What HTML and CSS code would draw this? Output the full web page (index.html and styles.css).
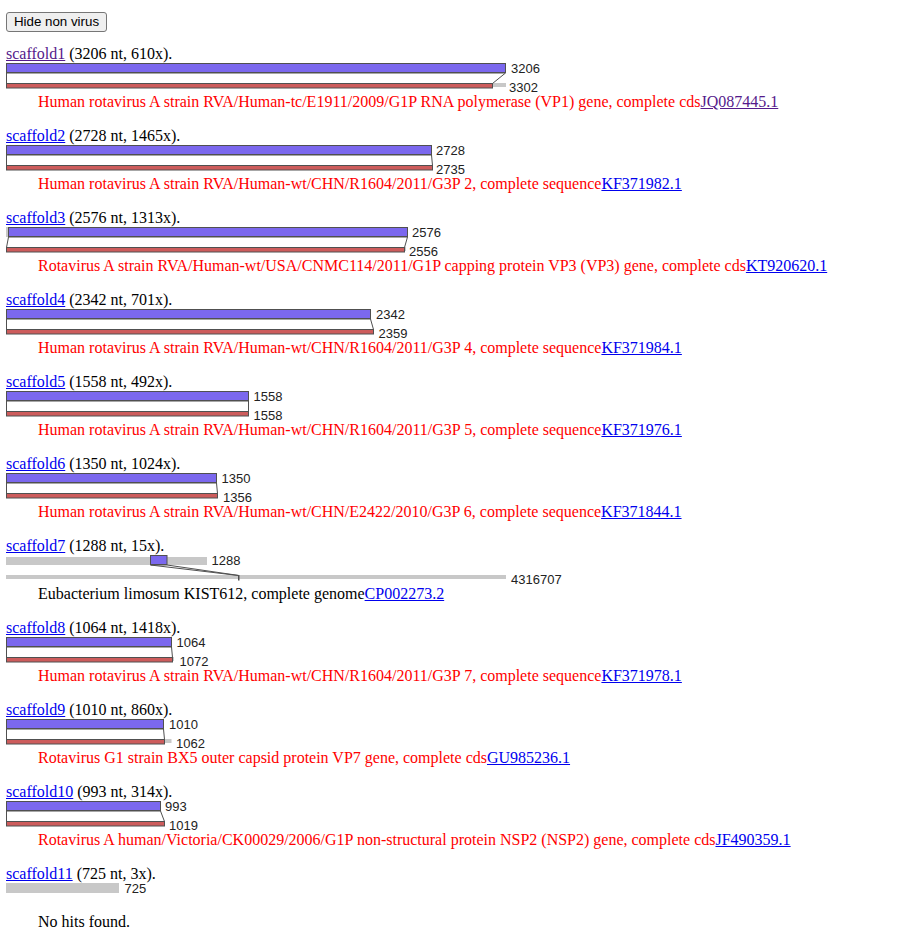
FILE: index.html
```html
<!DOCTYPE html>
<html>
<head>
<meta charset="utf-8">
<link rel="stylesheet" href="styles.css">
</head>
<body>
<div class="page">
<div class="bar"><button class="btn" type="button">Hide non virus</button></div>

<div class="block">
<div class="hdr"><a class="visited" href="#s1">scaffold1</a> (3206 nt, 610x).</div>
<svg class="fig" width="600" height="31">
<rect class="gl" x="6" y="21" width="500" height="4"/>
<polygon class="con" points="6.5,11 505.5,11 492.5,21.5 6.5,21.5"/>
<rect class="qa" x="6.5" y="1.5" width="499" height="9"/>
<rect class="sa" x="6.5" y="21.5" width="486" height="4.5"/>
<text class="lbl" x="511" y="10.7">3206</text>
<text class="lbl" x="509" y="30.3">3302</text>
</svg>
<div class="hit virus">Human rotavirus A strain RVA/Human-tc/E1911/2009/G1P RNA polymerase (VP1) gene, complete cds<a class="visited" href="#a1">JQ087445.1</a></div>
</div>

<div class="block">
<div class="hdr"><a href="#s2">scaffold2</a> (2728 nt, 1465x).</div>
<svg class="fig" width="600" height="31">
<rect class="gl" x="6" y="21" width="427" height="4"/>
<polygon class="con" points="6.5,11 431.5,11 432.5,21.5 6.5,21.5"/>
<rect class="qa" x="6.5" y="1.5" width="425" height="9"/>
<rect class="sa" x="6.5" y="21.5" width="426" height="4.5"/>
<text class="lbl" x="436" y="10.7">2728</text>
<text class="lbl" x="436" y="30.3">2735</text>
</svg>
<div class="hit virus">Human rotavirus A strain RVA/Human-wt/CHN/R1604/2011/G3P 2, complete sequence<a href="#a2">KF371982.1</a></div>
</div>

<div class="block">
<div class="hdr"><a href="#s3">scaffold3</a> (2576 nt, 1313x).</div>
<svg class="fig" width="600" height="31">
<rect class="gl" x="6" y="1" width="402" height="10"/>
<rect class="gl" x="6" y="21" width="400" height="4"/>
<polygon class="con" points="8.5,11 407.5,11 404.5,21.5 6.5,21.5"/>
<rect class="qa" x="8.5" y="1.5" width="399" height="9"/>
<rect class="sa" x="6.5" y="21.5" width="398" height="4.5"/>
<text class="lbl" x="412" y="10.7">2576</text>
<text class="lbl" x="409" y="30.3">2556</text>
</svg>
<div class="hit virus">Rotavirus A strain RVA/Human-wt/USA/CNMC114/2011/G1P capping protein VP3 (VP3) gene, complete cds<a href="#a3">KT920620.1</a></div>
</div>

<div class="block">
<div class="hdr"><a href="#s4">scaffold4</a> (2342 nt, 701x).</div>
<svg class="fig" width="600" height="31">
<rect class="gl" x="6" y="21" width="368" height="4"/>
<polygon class="con" points="6.5,11 370.5,11 373.5,21.5 6.5,21.5"/>
<rect class="qa" x="6.5" y="1.5" width="364" height="9"/>
<rect class="sa" x="6.5" y="21.5" width="367" height="4.5"/>
<text class="lbl" x="376" y="10.7">2342</text>
<text class="lbl" x="378.5" y="30.3">2359</text>
</svg>
<div class="hit virus">Human rotavirus A strain RVA/Human-wt/CHN/R1604/2011/G3P 4, complete sequence<a href="#a4">KF371984.1</a></div>
</div>

<div class="block">
<div class="hdr"><a href="#s5">scaffold5</a> (1558 nt, 492x).</div>
<svg class="fig" width="600" height="31">
<rect class="gl" x="6" y="21" width="243" height="4"/>
<polygon class="con" points="6.5,11 248.5,11 248.5,21.5 6.5,21.5"/>
<rect class="qa" x="6.5" y="1.5" width="242" height="9"/>
<rect class="sa" x="6.5" y="21.5" width="242" height="4.5"/>
<text class="lbl" x="253.5" y="10.7">1558</text>
<text class="lbl" x="253.5" y="30.3">1558</text>
</svg>
<div class="hit virus">Human rotavirus A strain RVA/Human-wt/CHN/R1604/2011/G3P 5, complete sequence<a href="#a5">KF371976.1</a></div>
</div>

<div class="block">
<div class="hdr"><a href="#s6">scaffold6</a> (1350 nt, 1024x).</div>
<svg class="fig" width="600" height="31">
<rect class="gl" x="6" y="21" width="212" height="4"/>
<polygon class="con" points="6.5,11 216.5,11 217.5,21.5 6.5,21.5"/>
<rect class="qa" x="6.5" y="1.5" width="210" height="9"/>
<rect class="sa" x="6.5" y="21.5" width="211" height="4.5"/>
<text class="lbl" x="221.5" y="10.7">1350</text>
<text class="lbl" x="223" y="30.3">1356</text>
</svg>
<div class="hit virus">Human rotavirus A strain RVA/Human-wt/CHN/E2422/2010/G3P 6, complete sequence<a href="#a6">KF371844.1</a></div>
</div>

<div class="block">
<div class="hdr"><a href="#s7">scaffold7</a> (1288 nt, 15x).</div>
<svg class="fig" width="600" height="31">
<rect class="gl" x="6" y="3" width="201" height="8"/>
<rect class="gl" x="6" y="21" width="500" height="4"/>
<polygon class="con" points="150.5,11 167,11 239,21.5 238.5,21.5"/>
<rect class="qa" x="150.5" y="1.5" width="16.5" height="9"/>
<rect class="sa" x="238.5" y="21.5" width="0.5" height="4.5"/>
<text class="lbl" x="211.5" y="10.7">1288</text>
<text class="lbl" x="511" y="30.3">4316707</text>
</svg>
<div class="hit">Eubacterium limosum KIST612, complete genome<a href="#a7">CP002273.2</a></div>
</div>

<div class="block">
<div class="hdr"><a href="#s8">scaffold8</a> (1064 nt, 1418x).</div>
<svg class="fig" width="600" height="31">
<rect class="gl" x="6" y="21" width="168" height="4"/>
<polygon class="con" points="6.5,11 171.5,11 172.5,21.5 6.5,21.5"/>
<rect class="qa" x="6.5" y="1.5" width="165" height="9"/>
<rect class="sa" x="6.5" y="21.5" width="166" height="4.5"/>
<text class="lbl" x="176.5" y="10.7">1064</text>
<text class="lbl" x="179.5" y="30.3">1072</text>
</svg>
<div class="hit virus">Human rotavirus A strain RVA/Human-wt/CHN/R1604/2011/G3P 7, complete sequence<a href="#a8">KF371978.1</a></div>
</div>

<div class="block">
<div class="hdr"><a href="#s9">scaffold9</a> (1010 nt, 860x).</div>
<svg class="fig" width="600" height="31">
<rect class="gl" x="6" y="21" width="165.5" height="4"/>
<polygon class="con" points="6.5,11 163.5,11 164.5,21.5 6.5,21.5"/>
<rect class="qa" x="6.5" y="1.5" width="157" height="9"/>
<rect class="sa" x="6.5" y="21.5" width="158" height="4.5"/>
<text class="lbl" x="169" y="10.7">1010</text>
<text class="lbl" x="176" y="30.3">1062</text>
</svg>
<div class="hit virus">Rotavirus G1 strain BX5 outer capsid protein VP7 gene, complete cds<a href="#a9">GU985236.1</a></div>
</div>

<div class="block">
<div class="hdr"><a href="#s10">scaffold10</a> (993 nt, 314x).</div>
<svg class="fig" width="600" height="31">
<rect class="gl" x="6" y="21" width="159" height="4"/>
<polygon class="con" points="6.5,11 160.5,11 164.5,21.5 6.5,21.5"/>
<rect class="qa" x="6.5" y="1.5" width="154" height="9"/>
<rect class="sa" x="6.5" y="21.5" width="158" height="4.5"/>
<text class="lbl" x="165" y="10.7">993</text>
<text class="lbl" x="169" y="30.3">1019</text>
</svg>
<div class="hit virus">Rotavirus A human/Victoria/CK00029/2006/G1P non-structural protein NSP2 (NSP2) gene, complete cds<a href="#a10">JF490359.1</a></div>
</div>

<div class="block last">
<div class="hdr"><a href="#s11">scaffold11</a> (725 nt, 3x).</div>
<svg class="fig" width="600" height="31">
<rect class="gl" x="6" y="1" width="113" height="10"/>
<text class="lbl" x="124.5" y="10.7">725</text>
</svg>
<div class="hit">No hits found.</div>
</div>
</div>
</body>
</html>
```

FILE: styles.css
```css
html, body {
  margin: 0;
  padding: 0;
  background: #ffffff;
}

body {
  font-family: "Liberation Serif", "Times New Roman", serif;
  font-size: 16px;
  color: #000000;
}

.page {
  padding-top: 12px;
}

.bar {
  height: 20px;
  margin-bottom: 12px;
  padding-left: 6px;
}

.btn {
  display: block;
  box-sizing: border-box;
  height: 20px;
  width: 101px;
  padding: 0 6px;
  margin: 0;
  font-family: "Liberation Sans", Arial, sans-serif;
  font-size: 13.333px;
  line-height: 16px;
  color: #000000;
  background: #efefef;
  border: 1px solid #767676;
  border-radius: 3px;
}

.block {
  margin-bottom: 15px;
}

.block.last {
  margin-bottom: 0;
}

.hdr {
  box-sizing: border-box;
  height: 18px;
  padding-top: 1px;
  line-height: 17px;
  padding-left: 6px;
  white-space: nowrap;
}

.hit {
  height: 18px;
  line-height: 18px;
  padding-left: 38px;
  white-space: nowrap;
}

.hit.virus {
  color: #ff0000;
}

a {
  color: #0000ee;
  text-decoration: underline;
}

a.visited {
  color: #551a8b;
}

.fig {
  display: block;
  overflow: visible;
}

.gl {
  fill: #c8c8c8;
}

.qa {
  fill: #7b68ee;
  stroke: #505050;
  stroke-width: 1;
}

.sa {
  fill: #cd5c5c;
  stroke: #505050;
  stroke-width: 1;
}

.con {
  fill: #ffffff;
  stroke: #505050;
  stroke-width: 1;
}

.lbl {
  font-family: "Liberation Sans", Arial, sans-serif;
  font-size: 13px;
  fill: #222222;
}
```
